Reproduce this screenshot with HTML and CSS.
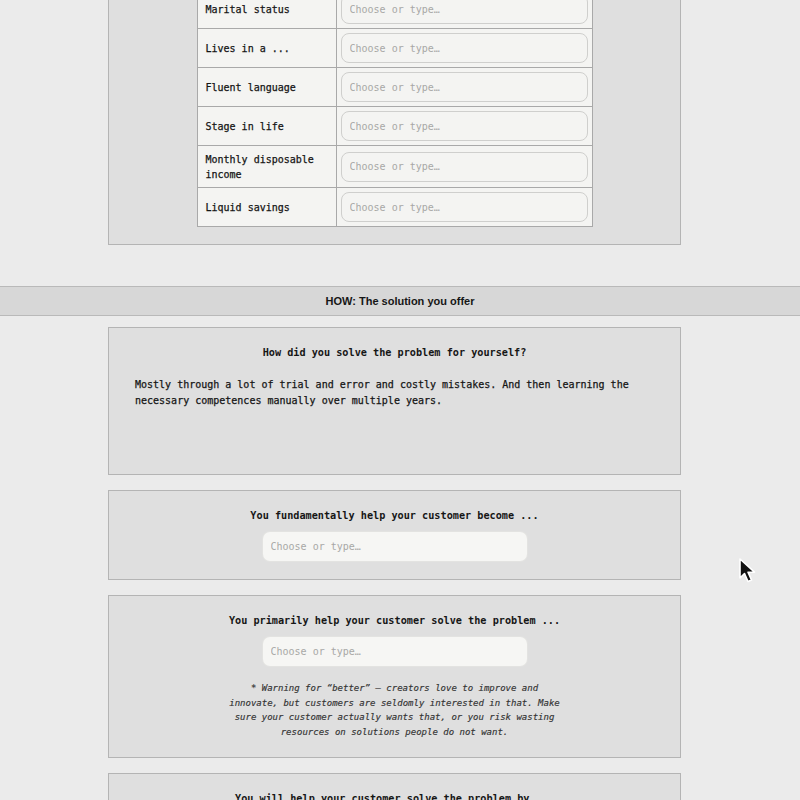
FILE: index.html
```html
<!DOCTYPE html>
<html lang="en">
<head>
<meta charset="utf-8">
<title>Customer profile</title>
<link rel="stylesheet" href="styles.css">
</head>
<body>
<main class="sheet">
  <div class="column">
    <section class="card card-traits">
      <table class="traits">
        <tr><th>Marital status</th><td><input class="cell-input" placeholder="Choose or type…"></td></tr>
        <tr><th>Lives in a ...</th><td><input class="cell-input" placeholder="Choose or type…"></td></tr>
        <tr><th>Fluent language</th><td><input class="cell-input" placeholder="Choose or type…"></td></tr>
        <tr><th>Stage in life</th><td><input class="cell-input" placeholder="Choose or type…"></td></tr>
        <tr><th>Monthly disposable income</th><td><input class="cell-input" placeholder="Choose or type…"></td></tr>
        <tr><th>Liquid savings</th><td><input class="cell-input" placeholder="Choose or type…"></td></tr>
      </table>
    </section>
  </div>

  <h2 class="section-bar">HOW: The solution you offer</h2>

  <div class="column">
    <section class="card card-answer">
      <h3 class="question">How did you solve the problem for yourself?</h3>
      <p class="answer">Mostly through a lot of trial and error and costly mistakes. And then learning the necessary competences manually over multiple years.</p>
    </section>

    <section class="card">
      <h3 class="question">You fundamentally help your customer become ...</h3>
      <input class="pick" placeholder="Choose or type…">
    </section>

    <section class="card">
      <h3 class="question">You primarily help your customer solve the problem ...</h3>
      <input class="pick" placeholder="Choose or type…">
      <p class="note">* Warning for “better” — creators love to improve and innovate, but customers are seldomly interested in that. Make sure your customer actually wants that, or you risk wasting resources on solutions people do not want.</p>
    </section>

    <section class="card">
      <h3 class="question">You will help your customer solve the problem by ...</h3>
      <input class="pick" placeholder="Choose or type…">
    </section>
  </div>
</main>

<svg class="pointer" width="22" height="28" viewBox="0 0 22 28" aria-hidden="true">
  <path d="M2 2 L2 21 L6.5 16.5 L10 24.5 L13.5 23 L10 15.2 L16.5 15.2 Z" fill="#111" stroke="#fff" stroke-width="1.6" stroke-linejoin="round"/>
</svg>
</body>
</html>
```

FILE: styles.css
```css
html, body {
  margin: 0;
  padding: 0;
}

body {
  background: #ebebeb;
  color: #1c1c1c;
  font-family: "DejaVu Sans Mono", "Liberation Mono", monospace;
  font-size: 10px;
  overflow: hidden;
  height: 800px;
}

.sheet {
  display: flex;
  flex-direction: column;
}

.column {
  width: 573px;
  margin-left: 108px;
  display: flex;
  flex-direction: column;
  gap: 15px;
}

.card {
  box-sizing: border-box;
  background: #dfdfdf;
  border: 1px solid #b4b4b4;
  padding: 18px 26px;
  display: flex;
  flex-direction: column;
  align-items: center;
}

/* first block is scrolled partly out of view */
.card-traits {
  margin-top: -30px;
  padding: 18px 0 17px;
}

.traits {
  width: 396px;
  border-collapse: collapse;
  background: #f4f4f2;
  border: 1px solid #a9a9a9;
}

.traits th,
.traits td {
  border: 1px solid #a9a9a9;
  vertical-align: middle;
}

.traits th {
  width: 122px;
  padding: 6px 8px 5px;
  text-align: left;
  font-weight: normal;
  line-height: 15px;
  color: #151515;
  -webkit-text-stroke: 0.25px #151515;
}

.traits td {
  padding: 4px;
}

.cell-input {
  box-sizing: border-box;
  display: block;
  width: 100%;
  height: 30px;
  border: 1px solid #cfcfcd;
  border-radius: 8px;
  background: #f4f4f2;
  padding: 0 8px;
  font: 10px "DejaVu Sans Mono", "Liberation Mono", monospace;
  color: #222;
}

.cell-input::placeholder,
.pick::placeholder {
  color: #a8a8a6;
}

.section-bar {
  margin: 41px 0 11px;
  height: 28px;
  line-height: 28px;
  background: #d7d7d7;
  border-top: 1px solid #b9b9b9;
  border-bottom: 1px solid #b9b9b9;
  text-align: center;
  font-family: "Liberation Sans", Arial, sans-serif;
  font-size: 11px;
  font-weight: bold;
  color: #161616;
}

.question {
  margin: 0;
  font-size: 10.2px;
  line-height: 14px;
  font-weight: bold;
  text-align: center;
  color: #161616;
}

.card-answer {
  min-height: 148px;
  align-items: stretch;
}

.answer {
  margin: 17px 0 0;
  line-height: 16px;
  color: #151515;
  -webkit-text-stroke: 0.25px #151515;
}

.pick {
  box-sizing: border-box;
  display: block;
  width: 264px;
  height: 29px;
  margin-top: 9px;
  border: none;
  border-radius: 7px;
  background: #f6f6f4;
  box-shadow: 0 0 0 1px #e3e3e1;
  padding: 0 8px;
  font: 10px "DejaVu Sans Mono", "Liberation Mono", monospace;
  color: #222;
}

.note {
  width: 336px;
  margin: 15px 0 0;
  font-size: 9px;
  line-height: 14.5px;
  font-style: italic;
  text-align: center;
  color: #333;
  -webkit-text-stroke: 0.15px #333;
}

.pointer {
  position: absolute;
  left: 738px;
  top: 557px;
}
```
